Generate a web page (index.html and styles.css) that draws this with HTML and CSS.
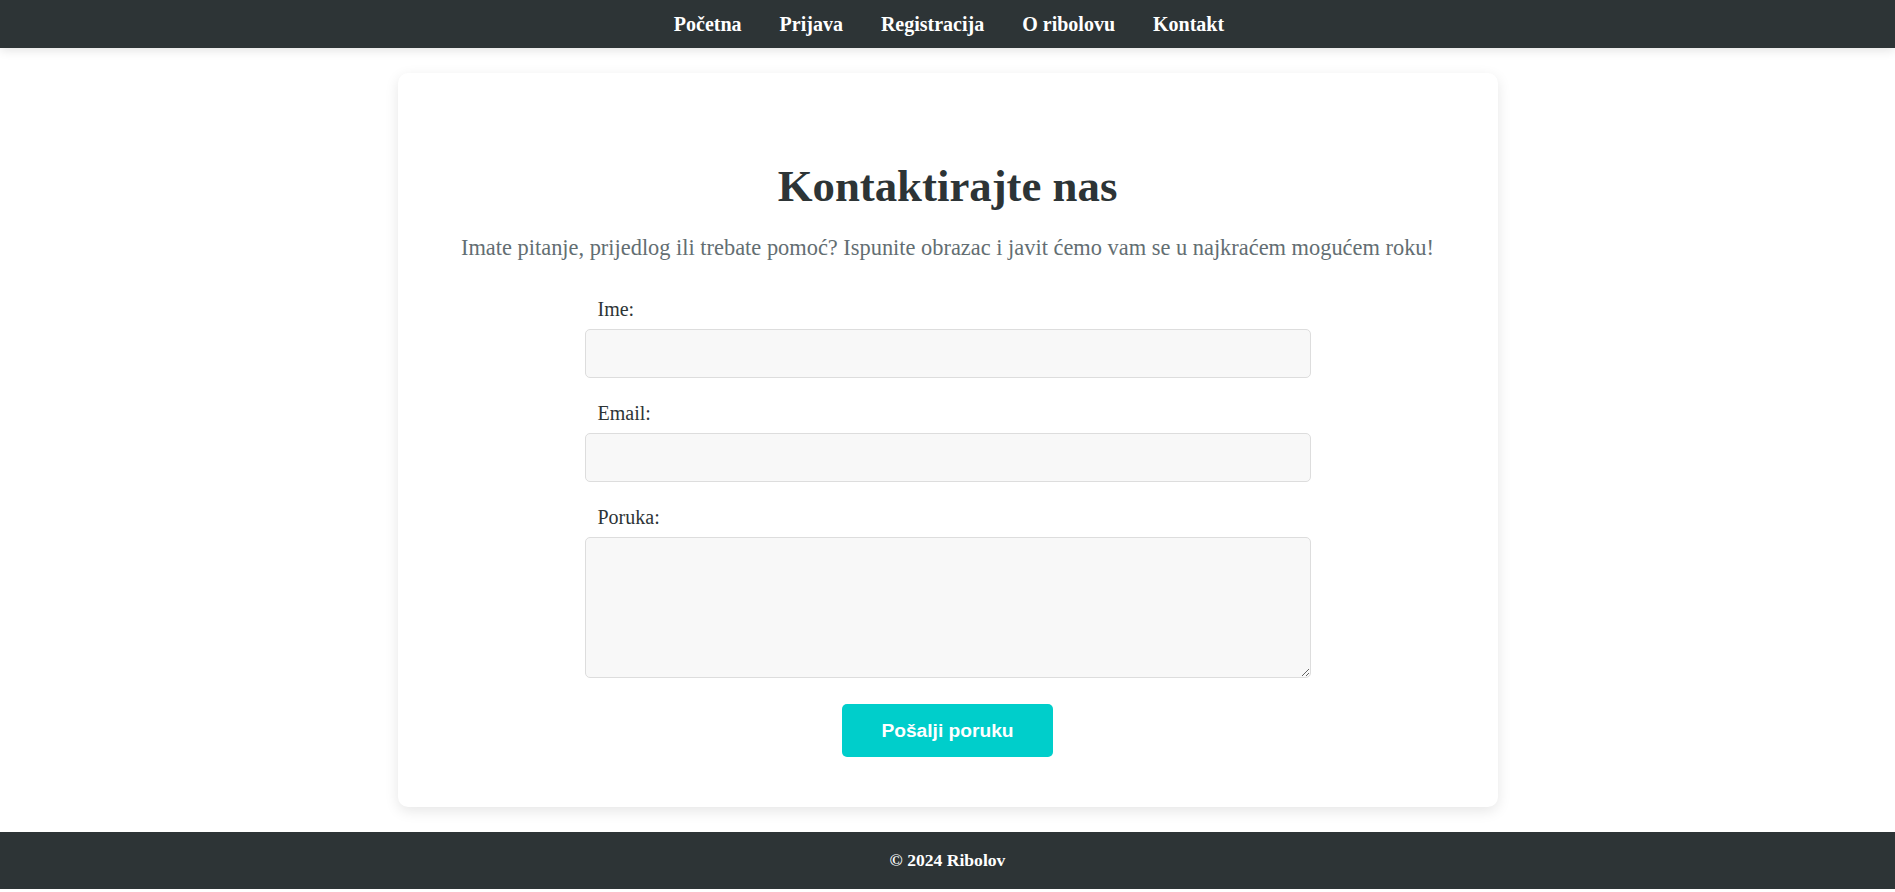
FILE: index.html
```html
<!DOCTYPE html>
<html lang="hr">
<head>
<meta charset="utf-8">
<title>Kontakt - Ribolov</title>
<link rel="stylesheet" href="styles.css">
</head>
<body>
<header class="topbar">
  <nav class="nav">
    <a class="nav-link" href="#">Početna</a>
    <a class="nav-link" href="#">Prijava</a>
    <a class="nav-link" href="#">Registracija</a>
    <a class="nav-link" href="#">O ribolovu</a>
    <a class="nav-link" href="#">Kontakt</a>
  </nav>
</header>
<main class="page">
  <section class="card">
    <h1 class="title">Kontaktirajte nas</h1>
    <p class="lead">Imate pitanje, prijedlog ili trebate pomoć? Ispunite obrazac i javit ćemo vam se u najkraćem mogućem roku!</p>
    <form class="form">
      <label class="label" for="ime">Ime:</label>
      <input class="field" id="ime" type="text">
      <label class="label" for="email">Email:</label>
      <input class="field" id="email" type="email">
      <label class="label" for="poruka">Poruka:</label>
      <textarea class="field area" id="poruka"></textarea>
      <button class="btn" type="button">Pošalji poruku</button>
    </form>
  </section>
</main>
<footer class="footer">
  <p class="footer-text">© 2024 Ribolov</p>
</footer>
</body>
</html>
```
FILE: styles.css
```css
html, body {
  margin: 0;
  padding: 0;
}
body {
  font-family: "Liberation Serif", "Times New Roman", serif;
  background: #ffffff;
  color: #2d3436;
}
.topbar {
  background: #2d3436;
  height: 48px;
  box-shadow: 0 2px 10px rgba(0, 0, 0, 0.12);
  position: relative;
  z-index: 1;
}
.nav {
  height: 48px;
  display: flex;
  justify-content: center;
  align-items: center;
  padding-left: 3px;
}
.nav-link {
  color: #ffffff;
  text-decoration: none;
  font-weight: bold;
  font-size: 20px;
  line-height: 23px;
  margin: 0 19px;
}
.page {
  padding: 25px 0 25px;
}
.card {
  width: 1020px;
  margin: 0 auto;
  background: #ffffff;
  border-radius: 10px;
  box-shadow: 0 4px 14px rgba(0, 0, 0, 0.1);
  padding: 50px 40px 50px;
  text-align: center;
}
.title {
  font-size: 44.8px;
  line-height: 52px;
  margin: 37px 0 23px;
  color: #2d3436;
}
.lead {
  font-size: 22.4px;
  line-height: 26px;
  color: #636e72;
  margin: 0 0 37px;
}
.form {
  display: flex;
  flex-direction: column;
  align-items: center;
  width: 700px;
  margin: 0 auto;
}
.label {
  display: block;
  width: 100%;
  text-align: left;
  font-size: 20px;
  line-height: 23px;
  margin-bottom: 8px;
  color: #2d3436;
}
.field {
  display: block;
  box-sizing: content-box;
  width: 100%;
  height: 23px;
  padding: 12px;
  border: 1px solid #dddddd;
  border-radius: 5px;
  background: #f8f8f8;
  font-family: "Liberation Serif", serif;
  font-size: 16px;
  margin: 0 0 24px;
}
.area {
  height: 115px;
  margin-bottom: 26px;
}
.btn {
  background: #00cecb;
  color: #ffffff;
  border: none;
  border-radius: 5px;
  font-family: "Liberation Sans", Arial, sans-serif;
  font-weight: bold;
  font-size: 19.2px;
  line-height: 23px;
  padding: 15px 39px;
}
.footer {
  background: #2d3436;
  color: #ffffff;
  text-align: center;
  padding: 18px 0;
}
.footer-text {
  margin: 0;
  font-weight: bold;
  font-size: 17.6px;
}
```
